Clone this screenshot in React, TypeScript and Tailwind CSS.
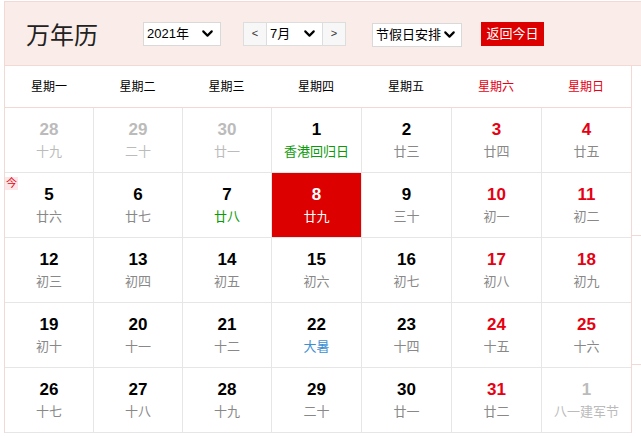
import { ChevronDown } from "lucide-react";

type Day = {
  n: number;
  lunar: string;
  other?: boolean;
  weekend?: boolean;
  lunarColor?: string;
  today?: boolean;
};

const weeks: Day[][] = [
  [
    { n: 28, lunar: "十九", other: true },
    { n: 29, lunar: "二十", other: true },
    { n: 30, lunar: "廿一", other: true },
    { n: 1, lunar: "香港回归日", lunarColor: "text-[#0a9a0a]" },
    { n: 2, lunar: "廿三" },
    { n: 3, lunar: "廿四", weekend: true },
    { n: 4, lunar: "廿五", weekend: true },
  ],
  [
    { n: 5, lunar: "廿六" },
    { n: 6, lunar: "廿七" },
    { n: 7, lunar: "廿八", lunarColor: "text-[#0a9a0a]" },
    { n: 8, lunar: "廿九", today: true },
    { n: 9, lunar: "三十" },
    { n: 10, lunar: "初一", weekend: true },
    { n: 11, lunar: "初二", weekend: true },
  ],
  [
    { n: 12, lunar: "初三" },
    { n: 13, lunar: "初四" },
    { n: 14, lunar: "初五" },
    { n: 15, lunar: "初六" },
    { n: 16, lunar: "初七" },
    { n: 17, lunar: "初八", weekend: true },
    { n: 18, lunar: "初九", weekend: true },
  ],
  [
    { n: 19, lunar: "初十" },
    { n: 20, lunar: "十一" },
    { n: 21, lunar: "十二" },
    { n: 22, lunar: "大暑", lunarColor: "text-[#3d8fd1]" },
    { n: 23, lunar: "十四" },
    { n: 24, lunar: "十五", weekend: true },
    { n: 25, lunar: "十六", weekend: true },
  ],
  [
    { n: 26, lunar: "十七" },
    { n: 27, lunar: "十八" },
    { n: 28, lunar: "十九" },
    { n: 29, lunar: "二十" },
    { n: 30, lunar: "廿一" },
    { n: 31, lunar: "廿二", weekend: true },
    { n: 1, lunar: "八一建军节", other: true },
  ],
];

const weekdays = ["星期一", "星期二", "星期三", "星期四", "星期五", "星期六", "星期日"];

function DayCell({ d, first }: { d: Day; first: boolean }) {
  let numColor = "text-black";
  if (d.other) numColor = "text-[#bbbbbb]";
  else if (d.weekend) numColor = "text-[#e60012]";
  let lunarColor = d.lunarColor ?? "text-[#888888]";
  if (d.other) lunarColor = "text-[#bbbbbb]";
  if (d.today) {
    numColor = "text-white";
    lunarColor = "text-white";
  }
  return (
    <div
      className={`relative h-[65px] flex flex-col items-center pt-[12px] border-b border-[#e6e6e6] ${
        first ? "" : "border-l"
      } ${d.today ? "bg-[#dd0000]" : "bg-white"}`}
    >
      <span className={`text-[17px] font-bold leading-[20px] ${numColor}`}>{d.n}</span>
      <span className={`text-[13px] leading-[20px] mt-[2px] ${lunarColor}`}>{d.lunar}</span>
    </div>
  );
}

export default function App() {
  return (
    <div
      className="w-[641px] h-[437px] overflow-hidden bg-white pl-[4px] pt-[1px]"
      style={{ fontFamily: '"Liberation Sans", "Noto Sans CJK SC", sans-serif' }}
    >
      <div className="w-[700px] border-l border-t border-[#f2d9d6]">
        {/* Header */}
        <div className="h-[64px] bg-[#f9ece9] border-b border-[#f2d9d6] flex items-center">
          <h1
            className="ml-[21px] w-[117px] text-[24px] leading-none text-[#222]"
            style={{ fontFamily: '"Noto Sans CJK SC", sans-serif' }}
          >
            万年历
          </h1>
          <div className="w-[78px] h-[24px] bg-white border border-[#d9d9d9] flex items-center justify-between pl-[3px] pr-[4px] text-[13px] text-black">
            <span>2021年</span>
            <ChevronDown size={17} strokeWidth={3} />
          </div>
          <div className="ml-[22px] flex items-center">
            <div className="w-[24px] h-[24px] bg-[#f7f7f7] border border-[#dddddd] flex items-center justify-center text-[11px] text-[#333]">
              &lt;
            </div>
            <div className="w-[55px] h-[24px] bg-white border-y border-[#dddddd] flex items-center justify-between pl-[3px] pr-[4px] text-[13px] text-black">
              <span>7月</span>
              <ChevronDown size={17} strokeWidth={3} />
            </div>
            <div className="w-[24px] h-[24px] bg-[#f7f7f7] border border-[#dddddd] flex items-center justify-center text-[11px] text-[#333]">
              &gt;
            </div>
          </div>
          <div className="ml-[26px] mt-[2px] w-[90px] h-[24px] bg-white border border-[#d9d9d9] flex items-center justify-between pl-[3px] pr-[3px] text-[13px] text-black">
            <span>节假日安排</span>
            <ChevronDown size={17} strokeWidth={3} />
          </div>
          <div className="ml-[19px] w-[63px] h-[24px] bg-[#dd0000] flex items-center justify-center text-[13px] text-white">
            返回今日
          </div>
        </div>

        <div className="flex">
          <div className="w-[627px] border-r border-[#f2d9d6]">
            {/* Weekdays */}
            <div className="grid grid-cols-[88px_89px_89px_90px_90px_90px_90px] h-[42px] border-b border-[#f2d9d6] bg-white">
              {weekdays.map((w, i) => (
                <div
                  key={w}
                  className={`flex items-center justify-center text-[12px] ${
                    i >= 5 ? "text-[#e60012]" : "text-black"
                  }`}
                >
                  {w}
                </div>
              ))}
            </div>
            {/* Days */}
            {weeks.map((week, wi) => (
              <div key={wi} className="relative grid grid-cols-[88px_89px_89px_90px_90px_90px_90px]">
                {week.map((d, di) => (
                  <DayCell key={di} d={d} first={di === 0} />
                ))}
                {wi === 1 && (
                  <div className="absolute left-0 top-[4px] w-[13px] h-[13px] bg-[#fbe7e7] text-[#e60012] text-[11px] leading-[13px] text-center">
                    今
                  </div>
                )}
              </div>
            ))}
          </div>
          <div className="flex-1">
            <div className="h-[170px] border-b border-[#f2d9d6]" />
            <div className="h-[129px] border-b border-[#f2d9d6]" />
          </div>
        </div>
      </div>
    </div>
  );
}
